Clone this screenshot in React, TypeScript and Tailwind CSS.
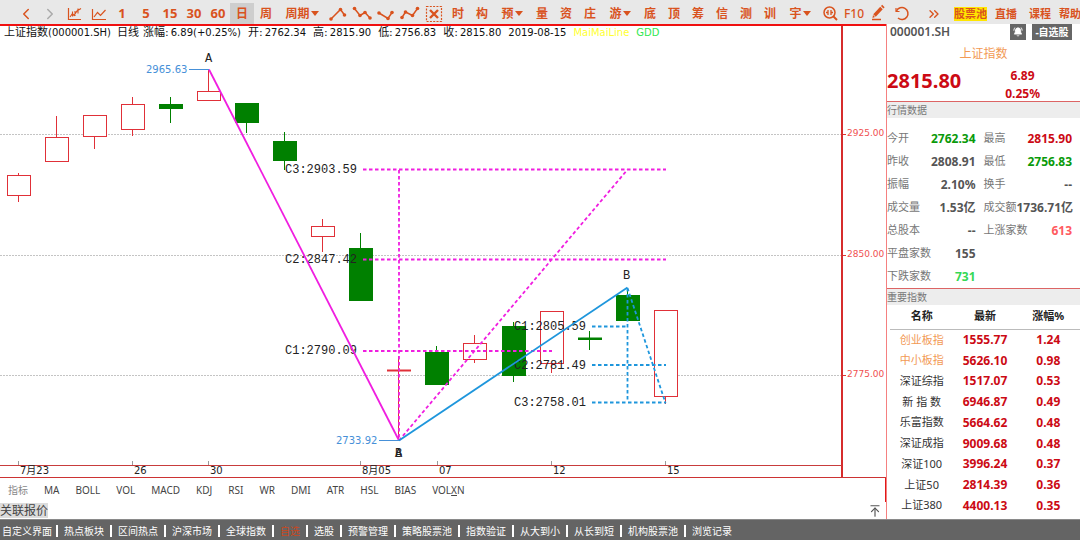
import type { ReactNode } from 'react';
import clsx from 'clsx';
import { LuArrowUpToLine, LuBellRing, LuChevronLeft, LuChevronRight, LuChevronsRight } from 'react-icons/lu';

export default function App() {
  return (
    <div className="flex min-h-screen flex-col overflow-hidden bg-white font-['Noto_Sans','Noto_Sans_CJK_SC',sans-serif] text-[#333]">
      <Toolbar />
      <div className="flex flex-1">
        <main className="flex min-w-0 flex-1 flex-col">
          <Chart />
          <Indicators />
          <div className="flex h-[17px] items-center justify-between pr-1">
            <button className="bg-[#dcdcdc] text-xs leading-[15px] text-[#444]">关联报价</button>
            <button aria-label="展开">
              <LuArrowUpToLine className="h-[14px] w-[14px] text-[#555]" />
            </button>
          </div>
        </main>
        <QuotePanel />
      </div>
      <Footer />
    </div>
  );
}

const Caret = () => (
  <svg viewBox="0 0 8 5" className="h-[5px] w-2" fill="currentColor">
    <path d="M0 0h8L4 5z" />
  </svg>
);

const Icon = ({ children }: { children: ReactNode }) => (
  <svg viewBox="0 0 20 20" className="h-5 w-5" fill="none" stroke="currentColor" strokeWidth="1.5">
    {children}
  </svg>
);

const ZigZag = ({ points }: { points: number[][] }) => (
  <Icon>
    <polyline points={points.map((p) => p.join(',')).join(' ')} />
    {points.map(([x, y]) => (
      <circle key={x} cx={x} cy={y} r="1.8" fill="currentColor" stroke="none" />
    ))}
  </Icon>
);

const Tool = ({ label, menu, wide, active, children }: {
  label?: string;
  menu?: boolean;
  wide?: boolean;
  active?: boolean;
  children?: ReactNode;
}) => (
  <button
    aria-label={label}
    className={clsx(
      'flex h-[21px] shrink-0 items-center justify-center gap-px',
      wide ? 'w-12' : menu ? 'w-9' : 'w-6',
      active && 'bg-[#cecece]',
    )}
  >
    {children}
    {menu && <Caret />}
  </button>
);

function Toolbar() {
  return (
    <header className="flex h-6 items-end overflow-hidden bg-[#e8e8e8] pl-[14px] text-xs font-bold whitespace-nowrap text-[#d9531e]">
      <Tool label="后退"><LuChevronLeft className="h-[18px] w-[18px]" /></Tool>
      <Tool label="前进"><LuChevronRight className="h-[18px] w-[18px] text-[#aaa]" /></Tool>
      <Tool label="分时">
        <Icon>
          <path d="M4.5 4v11.5H17" strokeWidth="1.2" />
          <path d="M6 13l2.5-3.5 1.5 2 3-4.5 4-2.5M8.5 7.5v5M11 7v5M14 4.5v5" strokeWidth="1.1" />
        </Icon>
      </Tool>
      <Tool label="走势">
        <Icon>
          <path d="M4.5 5v10.5H18M6 13l3.5-4.5 3 3L17.5 6" strokeWidth="1.2" />
        </Icon>
      </Tool>
      {['1', '5', '15', '30', '60'].map((t) => (
        <Tool key={t}><span className="text-[13px]">{t}</span></Tool>
      ))}
      <Tool active>日</Tool>
      <Tool>周</Tool>
      <Tool menu wide>周期</Tool>
      <Tool label="上折线"><ZigZag points={[[3, 15], [12.5, 5.5], [16.5, 11]]} /></Tool>
      <Tool label="下降线"><ZigZag points={[[2.5, 4.5], [8, 11.5], [13, 8.5], [18, 14]]} /></Tool>
      <Tool label="下折线"><ZigZag points={[[3, 9], [12, 14.5], [16, 8.5]]} /></Tool>
      <Tool label="上升线"><ZigZag points={[[2, 13.5], [5.5, 8], [12.5, 11.5], [17.5, 4.5]]} /></Tool>
      <Tool label="清除">
        <Icon>
          <rect x="2.5" y="2.5" width="15" height="15" strokeWidth="1.2" strokeDasharray="2 1.3" />
          <path d="M6 6l8 8M14 6l-8 8" strokeWidth="2.4" />
        </Icon>
      </Tool>
      <Tool>时</Tool>
      <Tool>构</Tool>
      <Tool menu>预</Tool>
      <Tool>量</Tool>
      <Tool>资</Tool>
      <Tool>庄</Tool>
      <Tool menu>游</Tool>
      {['底', '顶', '筹', '信', '测', '训'].map((t) => <Tool key={t}>{t}</Tool>)}
      <Tool menu>宇</Tool>
      <Tool label="搜索">
        <Icon>
          <circle cx="9.5" cy="8.5" r="5.5" />
          <path d="M13.5 12.5l3.5 3.5" strokeWidth="2" />
          <path d="M8 6v5M11 6v5M6 8.5h2M11 8.5h2" strokeWidth="1.3" />
        </Icon>
      </Tool>
      <Tool><span className="font-medium">F10</span></Tool>
      <Tool label="画笔">
        <Icon>
          <path d="M6.5 11.5l7-7.5" strokeWidth="3.4" />
          <path d="M14.2 3.2l1.2-1.2" strokeWidth="3.4" />
          <path d="M4 15.5h9" strokeWidth="1.5" />
          <path d="M4.5 14l.5-3 2 2z" fill="currentColor" stroke="none" />
        </Icon>
      </Tool>
      <Tool label="刷新">
        <Icon>
          <path d="M4.5 7a6 6 0 1 1 1.5 7" />
          <path d="M4 4v3.5h3.5" strokeWidth="1.2" />
        </Icon>
      </Tool>
      <nav className="ml-2 flex h-[21px] flex-1 items-center text-[11px] leading-[14px]">
        <Tool label="更多"><LuChevronsRight className="h-4 w-4" /></Tool>
        <a href="#pool" className="ml-2 bg-[#ffe600]">股票池</a>
        <a href="#live" className="ml-2">直播</a>
        <a href="#course" className="ml-3">课程</a>
        <a href="#help" className="ml-2">帮助</a>
      </nav>
    </header>
  );
}

// x, open/close top, open/close bottom, high, low
const candles = [
  { x: 19, top: 149, bottom: 170, high: 147, low: 176, up: true },
  { x: 57, top: 111, bottom: 136, high: 90, low: 136, up: true },
  { x: 95, top: 89, bottom: 111, high: 89, low: 123, up: true },
  { x: 133, top: 78, bottom: 104, high: 71, low: 110, up: true },
  { x: 171, top: 78, bottom: 83, high: 71, low: 97, up: false },
  { x: 209, top: 65, bottom: 75, high: 44, low: 75, up: true },
  { x: 247, top: 77, bottom: 97, high: 77, low: 107, up: false },
  { x: 285, top: 115, bottom: 135, high: 106, low: 144, up: false },
  { x: 323, top: 200, bottom: 211, high: 193, low: 226, up: true },
  { x: 361, top: 222, bottom: 275, high: 207, low: 275, up: false },
  { x: 399, top: 344, bottom: 345, high: 330, low: 414, up: true },
  { x: 437, top: 326, bottom: 359, high: 320, low: 359, up: false },
  { x: 475, top: 317, bottom: 334, high: 309, low: 337, up: true },
  { x: 514, top: 300, bottom: 350, high: 296, low: 356, up: false },
  { x: 552, top: 285, bottom: 338, high: 285, low: 347, up: true },
  { x: 590, top: 312, bottom: 314, high: 305, low: 324, up: false },
  { x: 628, top: 269, bottom: 295, high: 262, low: 295, up: false },
  { x: 666, top: 284, bottom: 371, high: 284, low: 378, up: true },
];

const prices = [
  { label: '2925.00', y: 108.5 },
  { label: '2850.00', y: 229.5 },
  { label: '2775.00', y: 349.5 },
];

const dates = [
  { label: '7月23', x: 18.5 },
  { label: '26', x: 132.5 },
  { label: '30', x: 208.5 },
  { label: '8月05', x: 360.5 },
  { label: '07', x: 437.5 },
  { label: '12', x: 551.5 },
  { label: '15', x: 665.5 },
];

const levels = [
  { label: 'C3:2903.59', x: 285, y: 147 },
  { label: 'C2:2847.42', x: 285, y: 237 },
  { label: 'C1:2790.09', x: 285, y: 328 },
  { label: 'C1:2805.59', x: 514, y: 304 },
  { label: 'C2:2781.49', x: 514, y: 343 },
  { label: 'C3:2758.01', x: 514, y: 380 },
];

const quote = [
  { label: '开:', value: '2762.34' },
  { label: '高:', value: '2815.90' },
  { label: '低:', value: '2756.83' },
  { label: '收:', value: '2815.80' },
];

function Chart() {
  return (
    <section className="relative border-t-2 border-b border-t-[#f01010] border-b-[#cc3333] font-['DejaVu_Sans','Noto_Sans_CJK_SC',sans-serif]">
      <svg viewBox="0 0 886 451" className="block h-auto w-full">
        {prices.map((p) => (
          <g key={p.label}>
            <path d={`M0 ${p.y}H841`} stroke="#c4c4c4" strokeDasharray="2 1" />
            <path d={`M843 ${p.y}h3`} stroke="#d33" />
            <text x="847" y={p.y + 1} fontSize="9" fill="#f05050">{p.label}</text>
          </g>
        ))}
        <path d="M842 0V451" stroke="#d62c2c" strokeWidth="2" />
        <path d="M0 439.5H842" stroke="#c83c3c" />
        {dates.map((d) => (
          <g key={d.label}>
            <path d={`M${d.x} 435v4`} stroke="#999" />
            <text x={d.x + 1.5} y="448" fontSize="10" fill="#222">{d.label}</text>
          </g>
        ))}

        {candles.map((c) => {
          const color = c.up ? '#e03038' : '#008000';
          return (
            <g key={c.x} stroke={color}>
              <path d={`M${c.x - 0.5} ${c.high}V${c.top}M${c.x - 0.5} ${c.bottom}V${c.low}`} />
              <rect
                x={c.x - 11.5}
                y={c.top + 0.5}
                width="23"
                height={c.bottom - c.top - 1}
                fill={c.up ? '#fff' : color}
              />
              {c.bottom - c.top < 3 && <path d={`M${c.x - 12} ${c.top + 0.5}h24`} strokeWidth="2" />}
            </g>
          );
        })}

        <g fontSize="12" fill="#222" className="font-['Liberation_Mono',monospace]">
          {levels.map((l) => <text key={l.label} x={l.x} y={l.y}>{l.label}</text>)}
          <text x="205" y="36">A</text>
          <text x="623" y="253">B</text>
          <text x="395" y="431">A</text>
          <text x="395" y="431">B</text>
        </g>

        <g fill="none" stroke="#f01ee0" strokeWidth="1.8">
          <path d="M209 43.5L399 414.5" />
          <path
            strokeDasharray="3.5 2.5"
            d="M399 414.5L628 143M363 143.5H666M363 233.5H666M363 325H552M399 144V414"
          />
        </g>
        <g fill="none" stroke="#1e96dc" strokeWidth="1.8">
          <path d="M399 414.5L627.5 261.5" />
          <path
            strokeDasharray="3.5 2.5"
            d="M627.5 262V376M627.5 262L665.5 377M592 300.5H628M592 339H666M592 376.5H666"
          />
        </g>

        <g fontSize="10" fill="#4690d8">
          <text x="146" y="47">2965.63</text>
          <text x="336" y="418">2733.92</text>
          <path d="M189 43.5h20M379 414.5h20" stroke="#4690d8" />
        </g>
      </svg>
      <div className="absolute top-0 left-1 flex text-[10px] leading-[13px] whitespace-nowrap text-[#111]">
        <span><span className="text-[11px]">上证指数</span>(000001.SH)</span>
        <span className="ml-[6px] text-[11px]">日线</span>
        <span className="ml-1 text-[11px]">涨幅:</span>
        <span className="ml-[2px]">6.89(+0.25%)</span>
        {quote.map((q) => (
          <span key={q.label} className="ml-[7px] flex gap-[2px]">
            <span className="text-[11px]">{q.label}</span>
            {q.value}
          </span>
        ))}
        <span className="ml-[7px]">2019-08-15</span>
        <span className="ml-[7px] text-[#ffff30]">MaiMaiLine</span>
        <span className="ml-[7px] text-[#30e850]">GDD</span>
      </div>
    </section>
  );
}

const indicators = ['MA', 'BOLL', 'VOL', 'MACD', 'KDJ', 'RSI', 'WR', 'DMI', 'ATR', 'HSL', 'BIAS'];

function Indicators() {
  return (
    <nav className="flex h-6 items-center gap-4 border-r border-[#e01818] pl-2 text-[10px] text-[#444]">
      <span className="text-[#888]">指标</span>
      {indicators.map((name) => <button key={name}>{name}</button>)}
      <button>VOL<u>X</u>N</button>
    </nav>
  );
}

const stats = [
  { label: '今开', value: '2762.34', color: 'text-[#0a9a0a]' },
  { label: '最高', value: '2815.90', color: 'text-[#cc0a14]' },
  { label: '昨收', value: '2808.91', color: 'text-[#555]' },
  { label: '最低', value: '2756.83', color: 'text-[#0a9a0a]' },
  { label: '振幅', value: '2.10%', color: 'text-[#555]' },
  { label: '换手', value: '--', color: 'text-[#555]' },
  { label: '成交量', value: '1.53亿', color: 'text-[#555]' },
  { label: '成交额', value: '1736.71亿', color: 'text-[#555]' },
  { label: '总股本', value: '--', color: 'text-[#555]' },
  { label: '上涨家数', value: '613', color: 'text-[#ff5a60]' },
  { label: '平盘家数', value: '155', color: 'text-[#555]' },
  { label: '下跌家数', value: '731', color: 'text-[#35d855]' },
];

const indices = [
  { name: '创业板指', last: '1555.77', change: '1.24', marked: true },
  { name: '中小板指', last: '5626.10', change: '0.98', marked: true },
  { name: '深证综指', last: '1517.07', change: '0.53' },
  { name: '新 指 数', last: '6946.87', change: '0.49' },
  { name: '乐富指数', last: '5664.62', change: '0.48' },
  { name: '深证成指', last: '9009.68', change: '0.48' },
  { name: '深证100', last: '3996.24', change: '0.37' },
  { name: '上证50', last: '2814.39', change: '0.36' },
  { name: '上证380', last: '4400.13', change: '0.35' },
];

const SectionTitle = ({ children }: { children: ReactNode }) => (
  <h2 className="border-t border-[#dc6464] bg-[#ededed] text-[10px] leading-4 text-[#777]">{children}</h2>
);

function QuotePanel() {
  return (
    <aside className="w-[194px] shrink-0 border-l border-[#f58080]">
      <div className="flex h-4 items-center pr-2 pl-[3px]">
        <span className="text-xs leading-4 font-semibold text-[#555]">000001.SH</span>
        <button aria-label="提醒" className="ml-auto flex h-4 w-4 items-center justify-center bg-[#666] text-white">
          <LuBellRing className="h-[10px] w-[10px] fill-current" />
        </button>
        <button className="ml-[6px] h-4 w-10 bg-[#666] text-[10px] leading-4 font-bold text-white">-自选股</button>
      </div>
      <h1 className="text-center text-xs leading-[27px] text-[#f29a55]">上证指数</h1>
      <div className="flex h-[34px] justify-between text-[#cc0a14]">
        <strong className="text-xl leading-7">2815.80</strong>
        <div className="mr-10 text-center text-xs leading-[18px] font-bold">
          <p>6.89</p>
          <p>0.25%</p>
        </div>
      </div>
      <SectionTitle>行情数据</SectionTitle>
      <dl className="grid grid-cols-2 gap-x-2 pt-[9px] pr-2">
        {stats.map((s) => (
          <div
            key={s.label}
            className="flex h-[23px] items-center justify-between whitespace-nowrap last:col-start-1"
          >
            <dt className="text-[11px] text-[#777]">{s.label}</dt>
            <dd className={clsx('text-xs font-bold', s.color)}>{s.value}</dd>
          </div>
        ))}
      </dl>
      <SectionTitle>重要指数</SectionTitle>
      <div className="pl-[3px]">
        <table className="h-[211px] w-full table-fixed text-center text-xs">
          <thead>
            <tr className="h-6 border-b border-[#bbb] text-[11px] text-[#222]">
              <th className="p-0">名称</th>
              <th className="p-0">最新</th>
              <th className="p-0">涨幅%</th>
            </tr>
          </thead>
          <tbody className="font-bold text-[#cc0a14]">
            {indices.map((i) => (
              <tr key={i.name}>
                <td className={clsx('p-0 text-[11px] font-normal', i.marked ? 'text-[#f29a55]' : 'text-[#333]')}>
                  {i.name}
                </td>
                <td className="p-0">{i.last}</td>
                <td className="p-0">{i.change}</td>
              </tr>
            ))}
          </tbody>
        </table>
      </div>
    </aside>
  );
}

const pages = [
  '自定义界面', '热点板块', '区间热点', '沪深市场', '全球指数', '自选', '选股', '预警管理',
  '策略股票池', '指数验证', '从大到小', '从长到短', '机构股票池', '浏览记录',
];

function Footer() {
  return (
    <footer className="flex h-[21px] items-center overflow-hidden border-t border-[#8a8a8a] bg-[#646464] pt-[2px] text-[10px] leading-3 whitespace-nowrap text-white">
      {pages.map((p) => (
        <a
          key={p}
          href={`#${p}`}
          className={clsx(
            'border-r-2 border-white px-[6px] first:pr-1 first:pl-[2px] last:border-r-0',
            p === '自选' && 'text-[#c8481e]',
          )}
        >
          {p}
        </a>
      ))}
    </footer>
  );
}
